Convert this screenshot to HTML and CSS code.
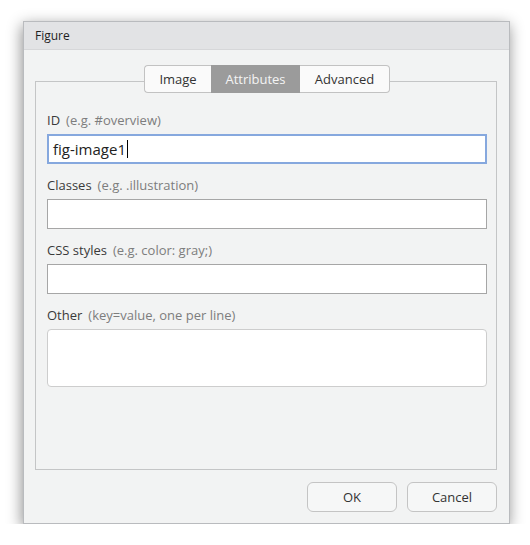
FILE: index.html
```html
<!DOCTYPE html>
<html>
<head>
<meta charset="utf-8">
<link rel="stylesheet" href="styles.css">
</head>
<body>
<div class="stage">
  <div class="dialog">
    <div class="titlebar">Figure</div>
    <div class="dialog-body">
      <div class="panel">
        <div class="tabs">
          <div class="tab tab-image">Image</div>
          <div class="tab tab-attr active">Attributes</div>
          <div class="tab tab-adv">Advanced</div>
        </div>
        <div class="fields">
          <div class="field">
            <div class="label">ID<span class="hint">(e.g. #overview)</span></div>
            <div class="input focused">fig-image1<span class="caret"></span></div>
          </div>
          <div class="field">
            <div class="label">Classes<span class="hint">(e.g. .illustration)</span></div>
            <div class="input"></div>
          </div>
          <div class="field">
            <div class="label">CSS styles<span class="hint">(e.g. color: gray;)</span></div>
            <div class="input"></div>
          </div>
          <div class="field">
            <div class="label">Other<span class="hint">(key=value, one per line)</span></div>
            <div class="textarea"></div>
          </div>
        </div>
      </div>
      <div class="buttons">
        <div class="btn">OK</div>
        <div class="btn">Cancel</div>
      </div>
    </div>
  </div>
</div>
</body>
</html>
```
FILE: styles.css
```css
html, body {
  margin: 0;
  padding: 0;
  background: #ffffff;
}
body {
  font-family: "Segoe UI", "Open Sans", "Noto Sans", sans-serif;
  color: #333333;
}
.stage {
  padding: 21px 0 0 23px;
}
.dialog {
  width: 487px;
  height: 503px;
  box-sizing: border-box;
  background: #f2f3f3;
  border: 1px solid #b9bbbe;
  box-shadow: -1px 4px 14px rgba(0, 0, 0, 0.45);
  display: flex;
  flex-direction: column;
}
.titlebar {
  height: 27px;
  background: #e2e3e5;
  border-bottom: 1px solid #d6d7d9;
  font-size: 12px;
  line-height: 28px;
  padding-left: 11px;
  color: #1e1e1e;
}
.dialog-body {
  padding: 31px 12px 12px 11px;
  display: flex;
  flex-direction: column;
}
.panel {
  height: 389px;
  box-sizing: border-box;
  border: 1px solid #c4c5c6;
  padding: 0 9px 0 11px;
}
.tabs {
  display: flex;
  justify-content: center;
  margin-top: -17px;
}
.tab {
  height: 28px;
  box-sizing: border-box;
  border-top: 1px solid #c2c2c2;
  border-bottom: 1px solid #c2c2c2;
  background: #fafafa;
  font-size: 13px;
  line-height: 27px;
  text-align: center;
  color: #333333;
}
.tab-image {
  width: 67px;
  border-left: 1px solid #c2c2c2;
  border-radius: 4px 0 0 4px;
}
.tab-attr {
  width: 89px;
}
.tab-adv {
  width: 90px;
  border-right: 1px solid #c2c2c2;
  border-radius: 0 4px 4px 0;
}
.tab.active {
  background: #9b9b9b;
  border-color: #9b9b9b;
  color: #f4f4f4;
}
.fields {
  margin-top: 19px;
  display: flex;
  flex-direction: column;
  gap: 13px;
}
.field {
  display: flex;
  flex-direction: column;
  gap: 6px;
}
.label {
  font-size: 13px;
  line-height: 16px;
  color: #3a3a3a;
}
.hint {
  color: #7d7d7d;
  margin-left: 6px;
}
.input {
  height: 30px;
  box-sizing: border-box;
  background: #ffffff;
  border: 1px solid #a6a6a6;
  font-size: 15px;
  line-height: 26px;
  padding-left: 5px;
  color: #222222;
  display: flex;
  align-items: center;
}
.input.focused {
  border: 2px solid #86a8de;
  padding-left: 4px;
}
.caret {
  display: inline-block;
  width: 1px;
  height: 18px;
  background: #000000;
  margin-left: 1px;
}
.textarea {
  height: 58px;
  box-sizing: border-box;
  background: #ffffff;
  border: 1px solid #cdcdcd;
  border-radius: 4px;
}
.buttons {
  margin-top: 12px;
  display: flex;
  justify-content: flex-end;
  gap: 10px;
}
.btn {
  width: 90px;
  height: 30px;
  box-sizing: border-box;
  border: 1px solid #c4c4c4;
  border-radius: 6px;
  background: #f6f7f7;
  font-size: 13px;
  line-height: 28px;
  text-align: center;
  color: #333333;
}
```
